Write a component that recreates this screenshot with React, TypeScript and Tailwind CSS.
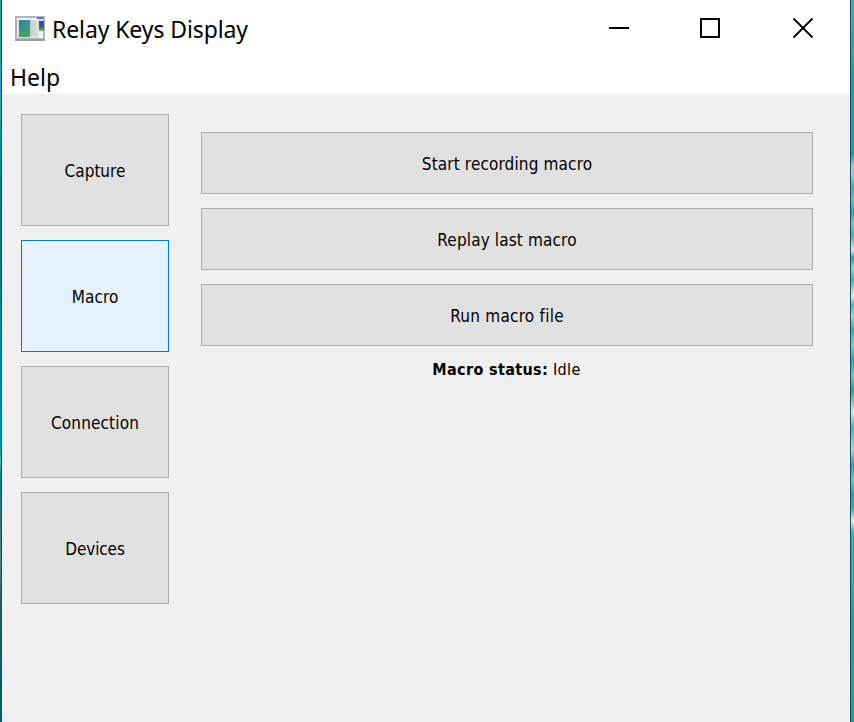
import React from "react";

type ButtonProps = { label: string; textClass: string; active?: boolean };

const shellFont =
  "font-['DejaVu_Sans_Condensed','DejaVu_Sans',sans-serif] [font-stretch:condensed] [font-variant-ligatures:none]";

function SideButton({ label, textClass, active }: ButtonProps) {
  return (
    <button
      className={`flex h-28 w-[148px] items-center justify-center border pt-0.5 ${
        active ? "border-[#0078d7] bg-[#e5f1fb]" : "border-[#adadad] bg-[#e1e1e1]"
      }`}
    >
      <span className={`whitespace-nowrap ${textClass}`}>{label}</span>
    </button>
  );
}

function WideButton({ label, textClass }: ButtonProps) {
  return (
    <button className="flex h-[62px] w-full items-center justify-center border border-[#adadad] bg-[#e1e1e1] pt-0.5">
      <span className={`whitespace-nowrap ${textClass}`}>{label}</span>
    </button>
  );
}

function AppIcon() {
  return (
    <svg width="30" height="25" viewBox="0 0 30 25" className="shrink-0">
      <defs>
        <linearGradient id="screen" x1="0" y1="0" x2="1" y2="1">
          <stop offset="0" stopColor="#347fae" />
          <stop offset="0.5" stopColor="#3d928b" />
          <stop offset="1" stopColor="#46ad4c" />
        </linearGradient>
        <linearGradient id="panel" x1="0" y1="0" x2="1" y2="0">
          <stop offset="0" stopColor="#bdcbd8" />
          <stop offset="1" stopColor="#e5dfdc" />
        </linearGradient>
        <linearGradient id="badge" x1="0" y1="0" x2="0" y2="1">
          <stop offset="0" stopColor="#2f439c" />
          <stop offset="0.6" stopColor="#34677c" />
          <stop offset="1" stopColor="#63c943" />
        </linearGradient>
      </defs>
      <rect width="30" height="25" fill="#b3b4be" />
      <rect x="2" y="2" width="26" height="20" fill="#dfe2e5" />
      <rect x="2" y="2" width="20" height="2" fill="#f4f5f5" />
      <rect x="4" y="4" width="11" height="17" fill="url(#screen)" />
      <path d="M4 14 9 16 13 13V20H4Z" fill="#43a75a" opacity=".7" />
      <rect x="15" y="4" width="9" height="16" fill="url(#panel)" />
      <rect x="22" y="1" width="6" height="2" fill="#686fac" />
      <rect x="24" y="5" width="5" height="10" fill="url(#badge)" />
      <rect x="24" y="15" width="4" height="7" fill="#f3f7ef" />
      <rect y="23" width="30" height="2" fill="#9c9ba8" />
    </svg>
  );
}

export default function App() {
  return (
    <div className="flex h-[722px] w-[854px] overflow-hidden text-black">
      <div className="w-px shrink-0 bg-[linear-gradient(#2a9caf_0px,#35a5bb_100px,#008da3_150px,#087487_230px,#008da5_330px,#009bb5_450px,#65bac0_463px,#087e91_475px,#38747d_520px,#4f8c90_560px,#255f69_600px,#005c69_722px)]" />
      <div className="w-px shrink-0 bg-[#174d59]" />
      <div className="flex w-[848px] shrink-0 flex-col bg-[#f0f0f0]">
        <header className="h-[94px] shrink-0 bg-white font-['Noto_Sans',sans-serif]">
          <div className="flex h-[60px] items-start">
            <div className="flex items-start gap-[7px] pl-[13px] pt-4">
              <AppIcon />
              <h1 className="-mt-1 whitespace-nowrap text-[23px] leading-[34px] tracking-[-0.1px]">Relay Keys Display</h1>
            </div>
            <svg width="206" height="22" viewBox="0 0 206 22" className="ml-auto mr-[36px] mt-[17px]" fill="none" stroke="#000" strokeWidth="2">
              <path d="M1 11H21M93 2H111V20H93Z" />
              <path d="M185.5 1.5 204.5 20.5M204.5 1.5 185.5 20.5" strokeWidth="1.8" />
            </svg>
          </div>
          <div className="pl-2 text-[23px] leading-[34px]">Help</div>
        </header>
        <main className={`flex gap-8 pl-[19px] pt-5 text-[17px] leading-5 ${shellFont}`}>
          <nav className="flex flex-col gap-3.5">
            <SideButton label="Capture" textClass="" />
            <SideButton label="Macro" textClass="tracking-[0.1px]" active />
            <SideButton label="Connection" textClass="tracking-[0.15px]" />
            <SideButton label="Devices" textClass="-tracking-[0.1px]" />
          </nav>
          <section className="flex w-[612px] flex-col gap-3.5 pt-[18px]">
            <WideButton label="Start recording macro" textClass="tracking-[0.14px]" />
            <WideButton label="Replay last macro" textClass="tracking-[0.14px]" />
            <WideButton label="Run macro file" textClass="tracking-[0.25px]" />
            <p className="pr-px text-center text-base leading-5 tracking-[0.35px]"><b>Macro status:</b> Idle</p>
          </section>
        </main>
      </div>
      <div className="w-px shrink-0 bg-[#174d59]" />
      <div className="w-[3px] shrink-0 bg-[linear-gradient(#37adc3_0px,#28a4bd_50px,#00a7c2_75px,#00a7c5_155px,#84cee2_165px,#8dd1e5_175px,#3caac8_188px,#67b9d3_200px,#18a8c2_213px,#72c5df_223px,#40aecb_236px,#d8eff2_250px,#319bb5_258px,#8ed4df_268px,#2eb3cc_280px,#d8f1ef_296px,#35bfd0_305px,#9bd6e2_316px,#2aabc8_330px,#6bcfe0_345px,#14acc5_360px,#60c7d6_376px,#209fb4_390px,#c8f0ef_412px,#38b4cf_428px,#a0dbe9_449px,#259fc2_465px,#59c4de_480px,#0ca1d2_495px,#35adc8_509px,#d7f4e9_520px,#27b6ca_533px,#10b6c4_550px,#18b6bf_580px,#07a2b5_625px,#0aa9bd_680px,#02a4b8_722px)]" />
    </div>
  );
}
